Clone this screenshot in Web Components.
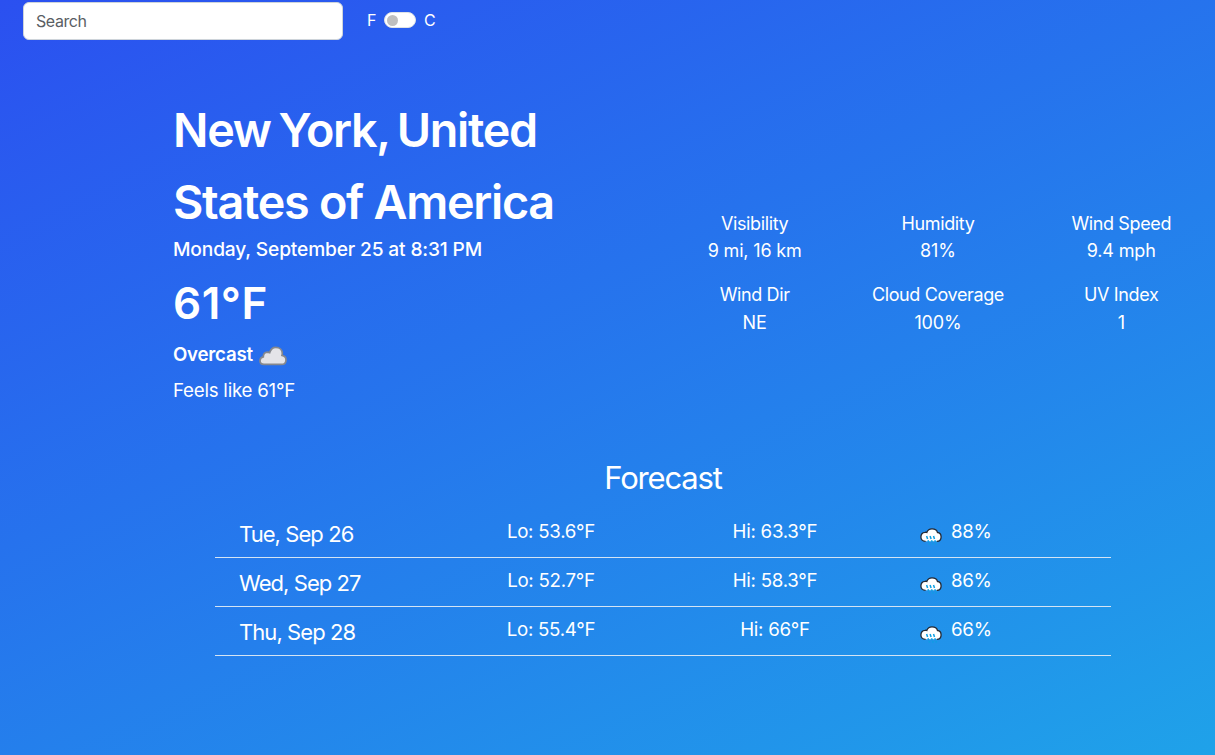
<!DOCTYPE html>
<html lang="en">
<head>
<meta charset="utf-8">
<title>Weather</title>
<style>
html,body{margin:0;height:100%}
body{font-family:Inter,"Liberation Sans",sans-serif;color:#fff;overflow:hidden}
</style>
</head>
<body>
<weather-app></weather-app>
<script>
const define = (name, html) => {
  const t = document.createElement('template');
  t.innerHTML = html;
  customElements.define(name, class extends HTMLElement {
    constructor() {
      super();
      this.attachShadow({ mode: 'open' }).append(t.content.cloneNode(true));
    }
  });
};

define('cloud-icon', `<style>:host{display:block;width:28px;height:20px}svg{display:block}</style>
<svg width="28" height="20" viewBox="0 0 28 20"><path d="M5 18.400C2.500 18.400 1 16.800 1 14.700C1 12.600 2.500 11.100 4.300 10.800C4.300 8.200 6.100 6.300 8.500 6.200C9.300 6.200 10 6.300 10.700 6.600C11.700 3.100 13.700 1.300 16.700 1.300C20.600 1.300 23.300 3.900 23.300 7.300C23.300 8 23.200 8.700 23 9.300C25.300 9.700 27 11.500 27 13.900C27 16.600 25.200 18.400 22.500 18.400Z" fill="#e4e4e8" stroke="#85888e" stroke-width="1.700"/></svg>`);

define('rain-icon', `<style>:host{display:block;width:22px;height:19px}svg{display:block}</style>
<svg width="22" height="19" viewBox="0 0 22 19"><path d="M5.600 13.300C2.500 13.300 .9 11.600 .9 9C.9 6.300 2.400 4.500 5 4.300C5.500 4.200 6.200 4.200 6.800 4.500C7.700 2 9.500 .9 12 .9C14.900 .9 17 2.300 17.500 4.500C19.700 4.700 21.100 6.500 21.100 9C21.100 11.600 19.500 13.300 16.800 13.300" fill="#fff" stroke="#272b35" stroke-width="1.300"/><path d="M6.600 8l1 3M10.100 8l1 3M13.500 8l1 3M8 12.200l.7 2.100M11.500 12.200l.7 2.100M14.800 12.200l.7 2.100M9.200 15.300l.4 1.300M12.700 15.300l.4 1.300M16 15.300l.4 1.200" stroke="#0d9fe3" stroke-width="1.500" fill="none"/></svg>`);

define('search-box', `<style>:host{display:block;box-sizing:border-box;width:320px;height:38px;padding:0 12px;background:#fff;border:1px solid #ced4da;border-radius:6px;color:#5a5e63;font-size:16px;line-height:37px;letter-spacing:-.43px}</style><slot></slot>`);

define('unit-switch', `<style>:host{display:flex;align-items:center;font-size:16px;line-height:24px;height:24px}
i{box-sizing:border-box;width:32px;height:16px;margin:0 8px;border-radius:8px;background:#fff;border:1px solid #dee2e6;padding:1px 1.500px}
b{display:block;width:11px;height:11px;margin-top:.5px;border-radius:50%;background:#bfbfbf}
span{display:inline-block;width:9px}</style><span>F</span><i><b></b></i><span>C</span>`);

define('current-weather', `<style>:host{display:block;width:440px}
h1,p{margin:0}
h1{font-size:46.700px;font-weight:600;line-height:72px;letter-spacing:-1.280px;position:relative;top:-1px}
.city{word-spacing:-2.500px;letter-spacing:-1.320px}
.date{font-size:19.200px;font-weight:500;line-height:29px;margin-top:-4px;letter-spacing:-.160px}
.temp{font-size:44px;font-weight:600;line-height:72px;margin-top:3px;letter-spacing:.55px}
.cond{display:flex;align-items:center;font-size:18.700px;font-weight:600;line-height:29px;letter-spacing:-.240px;margin-top:1px}
cloud-icon{margin:3px 0 0 6px}
.feels{font-size:18.700px;line-height:29px;margin-top:7px;letter-spacing:-.230px}</style>
<h1><span class="city">New York, United</span><br>States of America</h1><p class="date">Monday, September 25 at 8:31 PM</p><p class="temp">61°F</p><p class="cond">Overcast<cloud-icon></cloud-icon></p><p class="feels">Feels like 61°F</p>`);

define('weather-stat', `<style>:host{display:block;text-align:center;font-size:18px;line-height:27.200px;letter-spacing:-.370px}.value{letter-spacing:-.160px}</style><div><slot name="label"></slot></div><div class="value"><slot></slot></div>`);

define('stat-grid', `<style>:host{display:grid;grid-template-columns:repeat(3,183.300px);row-gap:17px}</style><slot></slot>`);

define('forecast-day', `<style>:host{display:grid;grid-template-columns:repeat(4,224px);box-sizing:border-box;height:49px;border-bottom:1px solid #d4e4f4;font-size:18.700px;line-height:29px;letter-spacing:-.270px}
.date{font-size:22px;line-height:34px;padding:8px 0 0 24px;letter-spacing:-.930px}
.mid{text-align:center;padding-top:8px}
.rain{display:flex;padding:8px 0 0 33px}
rain-icon{margin:11px 9px 0 0}</style>
<div class="date"><slot name="date"></slot></div><div class="mid"><slot name="lo"></slot></div><div class="mid"><slot name="hi"></slot></div><div class="rain"><rain-icon></rain-icon><slot name="rain"></slot></div>`);

define('forecast-list', `<style>:host{display:block;width:896px}h2{margin:0;text-align:center;font-size:31px;line-height:48px;font-weight:400;letter-spacing:-1.170px}section{margin-top:7px}</style><h2>Forecast</h2><section><slot></slot></section>`);

define('weather-app', `<style>:host{display:block;height:755px;background:linear-gradient(155deg,#2b50f0 0%,#1fa2e9 100%);overflow:hidden}
header{display:flex;padding:2px 0 0 23px}unit-switch{margin:6px 0 0 24px}
main{display:flex;align-items:flex-start;padding:55px 0 0 173px}
stat-grid{margin:115px 0 0 50px}
forecast-list{margin:49px 0 0 215px}</style>
<header><search-box>Search</search-box><unit-switch></unit-switch></header>
<main><current-weather></current-weather>
<stat-grid>
<weather-stat><span slot="label">Visibility</span>9 mi, 16 km</weather-stat>
<weather-stat><span slot="label">Humidity</span>81%</weather-stat>
<weather-stat><span slot="label">Wind Speed</span>9.4 mph</weather-stat>
<weather-stat><span slot="label">Wind Dir</span>NE</weather-stat>
<weather-stat><span slot="label">Cloud Coverage</span>100%</weather-stat>
<weather-stat><span slot="label">UV Index</span>1</weather-stat>
</stat-grid></main>
<forecast-list>
<forecast-day><span slot="date">Tue, Sep 26</span><span slot="lo">Lo: 53.6°F</span><span slot="hi">Hi: 63.3°F</span><span slot="rain">88%</span></forecast-day>
<forecast-day><span slot="date">Wed, Sep 27</span><span slot="lo">Lo: 52.7°F</span><span slot="hi">Hi: 58.3°F</span><span slot="rain">86%</span></forecast-day>
<forecast-day><span slot="date">Thu, Sep 28</span><span slot="lo">Lo: 55.4°F</span><span slot="hi">Hi: 66°F</span><span slot="rain">66%</span></forecast-day>
</forecast-list>`);
</script>
</body>
</html>
